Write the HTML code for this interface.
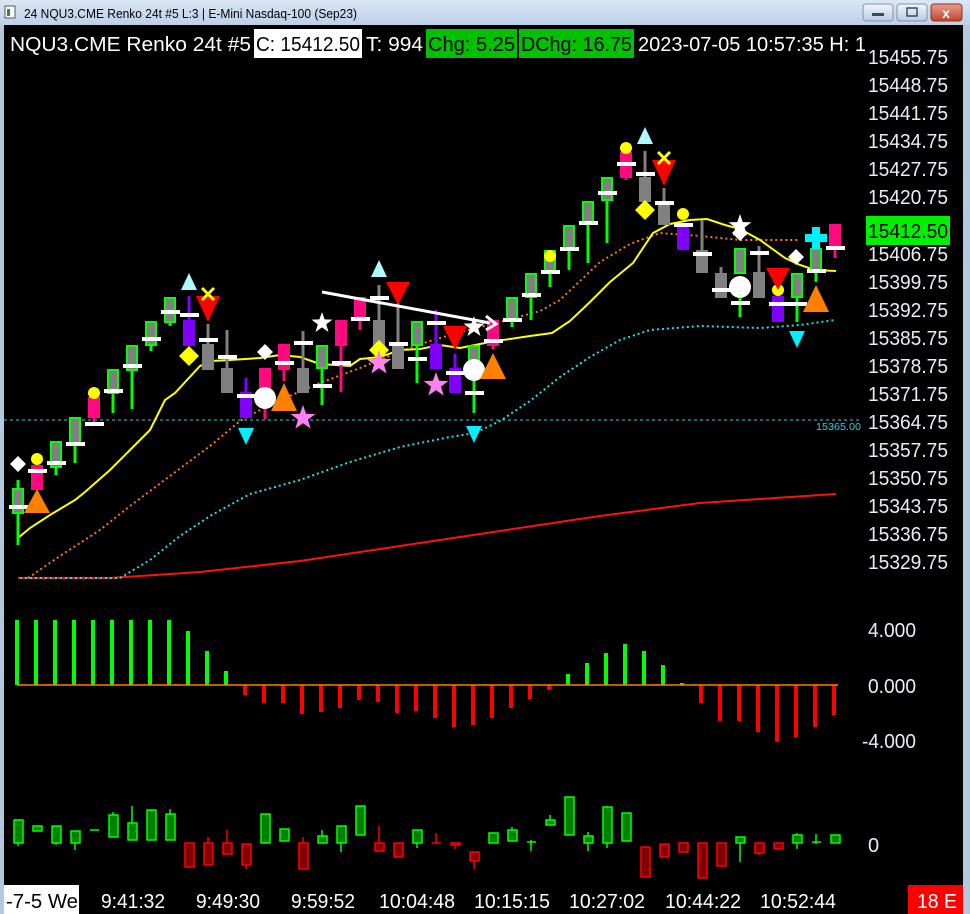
<!DOCTYPE html>
<html><head><meta charset="utf-8"><style>
html,body{margin:0;padding:0;background:#000;width:970px;height:914px;overflow:hidden}
svg{display:block}
text{font-family:"Liberation Sans",sans-serif}
</style></head><body>
<svg width="970" height="914" viewBox="0 0 970 914" xmlns="http://www.w3.org/2000/svg">
<defs>
<linearGradient id="tb" x1="0" y1="0" x2="0" y2="1"><stop offset="0" stop-color="#dbe7f5"/><stop offset="1" stop-color="#bcd0e8"/></linearGradient>
<linearGradient id="bt" x1="0" y1="0" x2="0" y2="1"><stop offset="0" stop-color="#f2f6fb"/><stop offset="1" stop-color="#b9cbe2"/></linearGradient>
<linearGradient id="cl" x1="0" y1="0" x2="0" y2="1"><stop offset="0" stop-color="#e8a08e"/><stop offset="1" stop-color="#c0442c"/></linearGradient>
<g id="tick"><rect x="-9" y="-2" width="19" height="4" fill="#fff"/></g>
</defs>
<rect width="970" height="914" fill="#000"/>
<!-- title bar -->
<rect x="0" y="0" width="970" height="25" fill="url(#tb)"/>
<rect x="0" y="25" width="4" height="889" fill="#b4c8df"/>
<rect x="963" y="25" width="7" height="889" fill="#b4c8df"/>
<rect x="5" y="6" width="10" height="12" fill="#fff" stroke="#555" stroke-width="1"/><rect x="7" y="9" width="3" height="7" fill="#2a8a3a"/>
<text x="24" y="18" font-size="13" fill="#000" textLength="333" lengthAdjust="spacingAndGlyphs">24 NQU3.CME  Renko 24t #5 L:3 | E-Mini Nasdaq-100 (Sep23)</text>
<rect x="863" y="4" width="30" height="17" rx="3" fill="url(#bt)" stroke="#7d93b0"/>
<rect x="872" y="13" width="12" height="3" fill="#3a4a60"/>
<rect x="897" y="4" width="30" height="17" rx="3" fill="url(#bt)" stroke="#7d93b0"/>
<rect x="907" y="8" width="10" height="8" fill="none" stroke="#3a4a60" stroke-width="1.5"/>
<rect x="931" y="4" width="31" height="17" rx="3" fill="url(#cl)" stroke="#8a3020"/>
<text x="946" y="18" font-size="14" font-weight="bold" fill="#fff" text-anchor="middle">x</text>

<!-- header -->
<text x="10" y="51" font-size="20" fill="#fff" textLength="241" lengthAdjust="spacingAndGlyphs">NQU3.CME  Renko 24t #5</text>
<rect x="254" y="29" width="108" height="29" fill="#fff"/>
<text x="256" y="51" font-size="20" fill="#000" textLength="104" lengthAdjust="spacingAndGlyphs">C: 15412.50</text>
<text x="366" y="51" font-size="20" fill="#fff" textLength="57" lengthAdjust="spacingAndGlyphs">T: 994</text>
<rect x="426" y="29" width="91" height="29" fill="#00c000"/>
<text x="428" y="51" font-size="20" fill="#000" textLength="87" lengthAdjust="spacingAndGlyphs">Chg: 5.25</text>
<rect x="519" y="29" width="115" height="29" fill="#00c000"/>
<text x="521" y="51" font-size="20" fill="#000" textLength="111" lengthAdjust="spacingAndGlyphs">DChg: 16.75</text>
<text x="638" y="51" font-size="20" fill="#fff" textLength="228" lengthAdjust="spacingAndGlyphs">2023-07-05 10:57:35 H: 1</text>

<!-- price axis -->
<g font-size="20" fill="#e8eef5">
<text x="868" y="64" textLength="80" lengthAdjust="spacingAndGlyphs">15455.75</text>
<text x="868" y="92" textLength="80" lengthAdjust="spacingAndGlyphs">15448.75</text>
<text x="868" y="120" textLength="80" lengthAdjust="spacingAndGlyphs">15441.75</text>
<text x="868" y="148" textLength="80" lengthAdjust="spacingAndGlyphs">15434.75</text>
<text x="868" y="176" textLength="80" lengthAdjust="spacingAndGlyphs">15427.75</text>
<text x="868" y="204" textLength="80" lengthAdjust="spacingAndGlyphs">15420.75</text>
<text x="868" y="261" textLength="80" lengthAdjust="spacingAndGlyphs">15406.75</text>
<text x="868" y="289" textLength="80" lengthAdjust="spacingAndGlyphs">15399.75</text>
<text x="868" y="317" textLength="80" lengthAdjust="spacingAndGlyphs">15392.75</text>
<text x="868" y="345" textLength="80" lengthAdjust="spacingAndGlyphs">15385.75</text>
<text x="868" y="373" textLength="80" lengthAdjust="spacingAndGlyphs">15378.75</text>
<text x="868" y="401" textLength="80" lengthAdjust="spacingAndGlyphs">15371.75</text>
<text x="868" y="429" textLength="80" lengthAdjust="spacingAndGlyphs">15364.75</text>
<text x="868" y="457" textLength="80" lengthAdjust="spacingAndGlyphs">15357.75</text>
<text x="868" y="485" textLength="80" lengthAdjust="spacingAndGlyphs">15350.75</text>
<text x="868" y="513" textLength="80" lengthAdjust="spacingAndGlyphs">15343.75</text>
<text x="868" y="541" textLength="80" lengthAdjust="spacingAndGlyphs">15336.75</text>
<text x="868" y="569" textLength="80" lengthAdjust="spacingAndGlyphs">15329.75</text>
<text x="868" y="637" textLength="48" lengthAdjust="spacingAndGlyphs">4.000</text>
<text x="868" y="693" textLength="48" lengthAdjust="spacingAndGlyphs">0.000</text>
<text x="862" y="748" textLength="54" lengthAdjust="spacingAndGlyphs">-4.000</text>
<text x="868" y="852">0</text>
</g>
<rect x="866" y="216" width="84" height="29" fill="#00f000"/>
<text x="868" y="238" font-size="20" fill="#000" textLength="80" lengthAdjust="spacingAndGlyphs">15412.50</text>

<!-- dashed level -->
<line x1="4" y1="420" x2="862" y2="420" stroke="#2fd0e0" stroke-width="1" stroke-dasharray="3,3"/>
<text x="816" y="430" font-size="10" fill="#2fd0e0" textLength="45" lengthAdjust="spacingAndGlyphs">15365.00</text>

<!-- lines -->
<polyline fill="none" stroke="#ff1010" stroke-width="2" points="18,578 110,578 200,572 300,561 400,546 500,531 600,516 700,503 760,499 836,494"/>
<polyline fill="none" stroke="#20e0f0" stroke-width="2" stroke-dasharray="2,3" points="20,578 120,578 150,560 180,536 210,516 250,494 300,480 350,462 400,447 450,437 475,433 500,421 530,401 560,377 590,357 620,340 650,330 700,326 760,328 800,325 835,320"/>
<polyline fill="none" stroke="#ff7a10" stroke-width="2" stroke-dasharray="2,3" points="28,578 60,556 100,530 130,506 170,476 210,446 240,421 260,410 280,400 320,383 360,368 420,344 460,332 500,322 540,311 560,300 600,262 630,244 660,233 700,236 740,240 800,240"/>
<polyline fill="none" stroke="#ffff00" stroke-width="2" points="18,538 30,528 50,515 75,500 85,492 110,470 130,450 150,430 165,400 175,393 200,366 212,361 230,360 260,358 280,355 300,357 320,364 350,366 360,359 380,357 400,350 420,349 440,345 460,348 490,342 510,339 530,336 552,333 570,321 590,302 610,282 633,263 653,233 670,224 690,220 707,219 725,225 740,229 760,240 785,258 800,265 815,270 836,271"/>

<!-- candles -->
<g stroke-width="0">
<!-- wicks -->
<g stroke-width="3">
<line x1="18" y1="480" x2="18" y2="545" stroke="#00ff00"/>
<line x1="56" y1="460" x2="56" y2="475" stroke="#00ff00"/>
<line x1="75" y1="440" x2="75" y2="463" stroke="#00ff00"/>
<line x1="94" y1="410" x2="94" y2="422" stroke="#ff0880"/>
<line x1="113" y1="385" x2="113" y2="413" stroke="#00ff00"/>
<line x1="132" y1="360" x2="132" y2="409" stroke="#00ff00"/>
<line x1="151" y1="335" x2="151" y2="351" stroke="#00ff00"/>
<line x1="170" y1="310" x2="170" y2="326" stroke="#00ff00"/>
<line x1="189" y1="296" x2="189" y2="322" stroke="#8000ff"/>
<line x1="208" y1="324" x2="208" y2="346" stroke="#808080"/>
<line x1="227" y1="330" x2="227" y2="370" stroke="#808080"/>
<line x1="246" y1="378" x2="246" y2="394" stroke="#8000ff"/>
<line x1="265" y1="380" x2="265" y2="419" stroke="#ff0880"/>
<line x1="284" y1="360" x2="284" y2="381" stroke="#ff0880"/>
<line x1="303" y1="331" x2="303" y2="370" stroke="#808080"/>
<line x1="322" y1="360" x2="322" y2="405" stroke="#00ff00"/>
<line x1="341" y1="340" x2="341" y2="392" stroke="#ff0880"/>
<line x1="360" y1="310" x2="360" y2="330" stroke="#ff0880"/>
<line x1="379" y1="285" x2="379" y2="322" stroke="#808080"/>
<line x1="398" y1="303" x2="398" y2="346" stroke="#808080"/>
<line x1="417" y1="340" x2="417" y2="383" stroke="#00ff00"/>
<line x1="436" y1="310" x2="436" y2="346" stroke="#8000ff"/>
<line x1="455" y1="354" x2="455" y2="370" stroke="#8000ff"/>
<line x1="474" y1="365" x2="474" y2="413" stroke="#00ff00"/>
<line x1="493" y1="340" x2="493" y2="349" stroke="#ff0880"/>
<line x1="512" y1="315" x2="512" y2="327" stroke="#00ff00"/>
<line x1="531" y1="290" x2="531" y2="320" stroke="#00ff00"/>
<line x1="550" y1="265" x2="550" y2="287" stroke="#00ff00"/>
<line x1="569" y1="245" x2="569" y2="270" stroke="#00ff00"/>
<line x1="588" y1="220" x2="588" y2="263" stroke="#00ff00"/>
<line x1="607" y1="195" x2="607" y2="243" stroke="#00ff00"/>
<line x1="626" y1="170" x2="626" y2="180" stroke="#ff0880"/>
<line x1="645" y1="151" x2="645" y2="179" stroke="#808080"/>
<line x1="664" y1="188" x2="664" y2="203" stroke="#808080"/>
<line x1="702" y1="220" x2="702" y2="252" stroke="#808080"/>
<line x1="721" y1="267" x2="721" y2="275" stroke="#808080"/>
<line x1="740" y1="290" x2="740" y2="317" stroke="#00ff00"/>
<line x1="759" y1="246" x2="759" y2="274" stroke="#808080"/>
<line x1="797" y1="295" x2="797" y2="322" stroke="#00ff00"/>
<line x1="816" y1="268" x2="816" y2="282" stroke="#00ff00"/>
<line x1="835" y1="245" x2="835" y2="258" stroke="#ff0880"/>
</g>
<!-- bodies: g = gray w/ green border -->
<g fill="#808080" stroke="#00ff00" stroke-width="2">
<rect x="13" y="489" width="10" height="24"/>
<rect x="51" y="442" width="10" height="25"/>
<rect x="70" y="418" width="10" height="25"/>
<rect x="108" y="370" width="10" height="23"/>
<rect x="127" y="346" width="10" height="24"/>
<rect x="146" y="322" width="10" height="23"/>
<rect x="165" y="298" width="10" height="24"/>
<rect x="317" y="346" width="10" height="22"/>
<rect x="412" y="322" width="10" height="23"/>
<rect x="469" y="346" width="10" height="24"/>
<rect x="507" y="298" width="10" height="23"/>
<rect x="526" y="274" width="10" height="23"/>
<rect x="545" y="251" width="10" height="20"/>
<rect x="564" y="226" width="10" height="23"/>
<rect x="583" y="202" width="10" height="21"/>
<rect x="602" y="178" width="10" height="22"/>
<rect x="735" y="249" width="10" height="24"/>
<rect x="792" y="274" width="10" height="23"/>
<rect x="811" y="249" width="10" height="23"/>
</g>
<g fill="#808080">
<rect x="202" y="344" width="12" height="26"/>
<rect x="221" y="368" width="12" height="25"/>
<rect x="297" y="368" width="12" height="25"/>
<rect x="373" y="320" width="12" height="26"/>
<rect x="392" y="344" width="12" height="25"/>
<rect x="639" y="177" width="12" height="25"/>
<rect x="658" y="201" width="12" height="24"/>
<rect x="696" y="250" width="12" height="23"/>
<rect x="715" y="273" width="12" height="25"/>
<rect x="753" y="272" width="12" height="26"/>
</g>
<g fill="#ff0880">
<rect x="31" y="465" width="12" height="25"/>
<rect x="88" y="397" width="12" height="21"/>
<rect x="259" y="368" width="12" height="25"/>
<rect x="278" y="344" width="12" height="26"/>
<rect x="335" y="320" width="12" height="26"/>
<rect x="354" y="297" width="12" height="23"/>
<rect x="487" y="320" width="12" height="26"/>
<rect x="620" y="152" width="12" height="26"/>
<rect x="829" y="224" width="12" height="24"/>
</g>
<g fill="#8000ff">
<rect x="183" y="320" width="12" height="26"/>
<rect x="240" y="392" width="12" height="26"/>
<rect x="430" y="344" width="12" height="25"/>
<rect x="449" y="368" width="12" height="25"/>
<rect x="677" y="225" width="12" height="25"/>
<rect x="772" y="296" width="12" height="26"/>
</g>
<!-- ticks -->
<g fill="#fff">
<rect x="9" y="505" width="19" height="4"/><rect x="28" y="469" width="19" height="4"/><rect x="47" y="461" width="19" height="4"/><rect x="66" y="442" width="19" height="4"/><rect x="85" y="422" width="19" height="4"/><rect x="104" y="389" width="19" height="4"/><rect x="123" y="364" width="19" height="4"/><rect x="142" y="337" width="19" height="4"/><rect x="161" y="310" width="19" height="4"/><rect x="180" y="313" width="19" height="4"/><rect x="199" y="338" width="19" height="4"/><rect x="218" y="355" width="19" height="4"/><rect x="237" y="394" width="19" height="4"/><rect x="275" y="361" width="19" height="4"/><rect x="294" y="341" width="19" height="4"/><rect x="313" y="384" width="19" height="4"/><rect x="332" y="361" width="19" height="4"/><rect x="351" y="317" width="19" height="4"/><rect x="370" y="296" width="19" height="4"/><rect x="389" y="342" width="19" height="4"/><rect x="408" y="357" width="19" height="4"/><rect x="427" y="321" width="19" height="4"/><rect x="446" y="371" width="19" height="4"/><rect x="465" y="391" width="19" height="4"/><rect x="484" y="339" width="19" height="4"/><rect x="503" y="318" width="19" height="4"/><rect x="522" y="293" width="19" height="4"/><rect x="541" y="270" width="19" height="4"/><rect x="560" y="247" width="19" height="4"/><rect x="579" y="221" width="19" height="4"/><rect x="598" y="191" width="19" height="4"/><rect x="617" y="162" width="19" height="4"/><rect x="636" y="172" width="19" height="4"/><rect x="655" y="201" width="19" height="4"/><rect x="674" y="223" width="19" height="4"/><rect x="693" y="252" width="19" height="4"/><rect x="712" y="288" width="19" height="4"/><rect x="731" y="301" width="19" height="4"/><rect x="750" y="251" width="19" height="4"/><rect x="769" y="302" width="19" height="4"/><rect x="788" y="302" width="19" height="4"/><rect x="807" y="269" width="19" height="4"/><rect x="826" y="246" width="19" height="4"/>
</g>
</g>

<!-- markers -->
<!-- white circles -->
<g fill="#fff"><circle cx="265" cy="398" r="11"/><circle cx="474" cy="370" r="11"/><circle cx="740" cy="287" r="11"/></g>
<!-- yellow circles -->
<g fill="#ffff00"><circle cx="37" cy="459" r="6"/><circle cx="94" cy="393" r="6"/><circle cx="550" cy="256" r="6"/><circle cx="626" cy="148" r="6"/><circle cx="683" cy="214" r="6"/><circle cx="778" cy="290" r="6"/></g>
<!-- orange triangles up -->
<g fill="#ff8000"><polygon points="37,489 24,513 50,513"/><polygon points="284,383 271,411 297,411"/><polygon points="493,353 480,379 506,379"/><polygon points="816,285 803,312 829,312"/></g>
<!-- red triangles down -->
<g fill="#ff0000"><polygon points="196,296 220,296 208,322"/><polygon points="386,282 410,282 398,305"/><polygon points="443,326 467,326 455,350"/><polygon points="652,160 676,160 664,186"/><polygon points="766,268 790,268 778,290"/></g>
<!-- light cyan triangles up -->
<g fill="#b0f8ff"><polygon points="189,273 181,290 197,290"/><polygon points="379,260 371,277 387,277"/><polygon points="645,127 637,144 653,144"/></g>
<!-- cyan triangles down -->
<g fill="#00f0ff"><polygon points="238,428 254,428 246,445"/><polygon points="466,426 482,426 474,443"/><polygon points="789,331 805,331 797,348"/></g>
<!-- yellow diamonds -->
<g fill="#ffff00"><polygon points="189,346 199,356 189,366 179,356"/><polygon points="379,340 389,350 379,360 369,350"/><polygon points="645,200 655,210 645,220 635,210"/></g>
<!-- white diamonds -->
<g fill="#fff"><polygon points="18,456 26,464 18,472 10,464"/><polygon points="265,344 273,352 265,360 257,352"/><polygon points="740,225 748,233 740,241 732,233"/><polygon points="796,249 804,257 796,265 788,257"/></g>
<!-- yellow X -->
<g stroke="#ffff00" stroke-width="3"><line x1="202" y1="288" x2="214" y2="300"/><line x1="214" y1="288" x2="202" y2="300"/><line x1="658" y1="152" x2="670" y2="164"/><line x1="670" y1="152" x2="658" y2="164"/></g>
<!-- stars -->
<g fill="#ff80f0">
<polygon transform="translate(303,418)" points="0,-13 3.1,-4.2 12.4,-4 5,1.6 7.6,10.5 0,5.2 -7.6,10.5 -5,1.6 -12.4,-4 -3.1,-4.2"/>
<polygon transform="translate(379,363)" points="0,-13 3.1,-4.2 12.4,-4 5,1.6 7.6,10.5 0,5.2 -7.6,10.5 -5,1.6 -12.4,-4 -3.1,-4.2"/>
<polygon transform="translate(436,385)" points="0,-13 3.1,-4.2 12.4,-4 5,1.6 7.6,10.5 0,5.2 -7.6,10.5 -5,1.6 -12.4,-4 -3.1,-4.2"/>
</g>
<g fill="#fff">
<polygon transform="translate(322,323)" points="0,-11 2.6,-3.6 10.5,-3.4 4.2,1.4 6.5,9 0,4.4 -6.5,9 -4.2,1.4 -10.5,-3.4 -2.6,-3.6"/>
<polygon transform="translate(474,327)" points="0,-11 2.6,-3.6 10.5,-3.4 4.2,1.4 6.5,9 0,4.4 -6.5,9 -4.2,1.4 -10.5,-3.4 -2.6,-3.6"/>
<polygon transform="translate(740,226)" points="0,-12 2.8,-3.9 11.4,-3.7 4.6,1.5 7,9.8 0,4.8 -7,9.8 -4.6,1.5 -11.4,-3.7 -2.8,-3.9"/>
</g>
<!-- cyan cross -->
<g fill="#00f0ff"><rect x="812" y="227" width="8" height="22"/><rect x="805" y="234" width="22" height="8"/></g>
<!-- white arrow -->
<line x1="322" y1="292" x2="490" y2="323" stroke="#fff" stroke-width="3"/>
<polyline points="486,316 496,324 486,330" fill="none" stroke="#fff" stroke-width="3"/>

<!-- histogram -->
<g fill="#00ff00">
<rect x="15" y="620" width="4" height="65"/><rect x="34" y="620" width="4" height="65"/><rect x="53" y="620" width="4" height="65"/><rect x="72" y="620" width="4" height="65"/><rect x="91" y="620" width="4" height="65"/><rect x="110" y="620" width="4" height="65"/><rect x="129" y="620" width="4" height="65"/><rect x="148" y="620" width="4" height="65"/><rect x="167" y="620" width="4" height="65"/><rect x="186" y="631" width="4" height="54"/><rect x="205" y="651" width="4" height="34"/><rect x="224" y="671" width="4" height="14"/>
<rect x="566" y="674" width="4" height="11"/><rect x="585" y="663" width="4" height="22"/><rect x="604" y="653" width="4" height="32"/><rect x="623" y="644" width="4" height="41"/><rect x="642" y="651" width="4" height="34"/><rect x="661" y="665" width="4" height="20"/><rect x="680" y="683" width="4" height="2"/>
</g>
<g fill="#ff0000">
<rect x="243" y="685" width="4" height="10"/><rect x="262" y="685" width="4" height="18"/><rect x="281" y="685" width="4" height="18"/><rect x="300" y="685" width="4" height="29"/><rect x="319" y="685" width="4" height="27"/><rect x="338" y="685" width="4" height="23"/><rect x="357" y="685" width="4" height="15"/><rect x="376" y="685" width="4" height="17"/><rect x="395" y="685" width="4" height="28"/><rect x="414" y="685" width="4" height="26"/><rect x="433" y="685" width="4" height="33"/><rect x="452" y="685" width="4" height="42"/><rect x="471" y="685" width="4" height="40"/><rect x="490" y="685" width="4" height="33"/><rect x="509" y="685" width="4" height="23"/><rect x="528" y="685" width="4" height="14"/><rect x="547" y="685" width="4" height="5"/>
<rect x="699" y="685" width="4" height="18"/><rect x="718" y="685" width="4" height="36"/><rect x="737" y="685" width="4" height="36"/><rect x="756" y="685" width="4" height="47"/><rect x="775" y="685" width="4" height="57"/><rect x="794" y="685" width="4" height="52"/><rect x="813" y="685" width="4" height="42"/><rect x="832" y="685" width="4" height="30"/>
</g>
<line x1="17" y1="685" x2="838" y2="685" stroke="#ff8000" stroke-width="1.5"/>

<!-- volume candles -->
<g stroke-width="1.5">
<g stroke="#00ff00" fill="#008000">
<line x1="18" y1="843" x2="18" y2="846"/><rect x="14" y="820" width="9" height="23"/>
<rect x="33" y="826" width="9" height="5"/>
<line x1="56" y1="843" x2="56" y2="845"/><rect x="52" y="826" width="9" height="17"/>
<line x1="75" y1="843" x2="75" y2="850"/><rect x="71" y="831" width="9" height="12"/>
<line x1="90" y1="830" x2="99" y2="830"/>
<line x1="113" y1="812" x2="113" y2="815"/><rect x="109" y="815" width="9" height="22"/>
<line x1="132" y1="806" x2="132" y2="823"/><rect x="128" y="823" width="9" height="17"/>
<rect x="147" y="810" width="9" height="30"/>
<line x1="170" y1="809" x2="170" y2="814"/><rect x="166" y="814" width="9" height="26"/>
<rect x="261" y="814" width="9" height="29"/>
<rect x="280" y="829" width="9" height="12"/>
<line x1="322" y1="830" x2="322" y2="836"/><rect x="318" y="836" width="9" height="7"/>
<line x1="341" y1="843" x2="341" y2="852"/><rect x="337" y="826" width="9" height="17"/>
<rect x="356" y="806" width="9" height="29"/>
<line x1="417" y1="843" x2="417" y2="848"/><rect x="413" y="830" width="9" height="13"/>
<rect x="489" y="833" width="9" height="10"/>
<line x1="512" y1="827" x2="512" y2="830"/><rect x="508" y="830" width="9" height="11"/>
<line x1="531" y1="840" x2="531" y2="851"/><line x1="527" y1="842" x2="536" y2="842"/>
<line x1="550" y1="815" x2="550" y2="820"/><rect x="546" y="820" width="9" height="5"/>
<rect x="565" y="797" width="9" height="38"/>
<line x1="588" y1="832" x2="588" y2="851"/><rect x="584" y="836" width="9" height="7"/>
<line x1="607" y1="806" x2="607" y2="848"/><rect x="603" y="807" width="9" height="36"/>
<rect x="622" y="813" width="9" height="28"/>
<line x1="740" y1="843" x2="740" y2="862"/><rect x="736" y="837" width="9" height="6"/>
<line x1="797" y1="833" x2="797" y2="849"/><rect x="793" y="835" width="9" height="8"/>
<line x1="816" y1="834" x2="816" y2="844"/><line x1="812" y1="842" x2="821" y2="842"/>
<rect x="831" y="835" width="9" height="8"/>
</g>
<g stroke="#ff0000" fill="#800000">
<rect x="185" y="843" width="9" height="24"/>
<line x1="208" y1="837" x2="208" y2="843"/><rect x="204" y="843" width="9" height="22"/>
<line x1="227" y1="830" x2="227" y2="843"/><rect x="223" y="843" width="9" height="11"/>
<line x1="246" y1="865" x2="246" y2="869"/><rect x="242" y="844" width="9" height="21"/>
<line x1="303" y1="837" x2="303" y2="843"/><rect x="299" y="843" width="9" height="26"/>
<line x1="379" y1="826" x2="379" y2="843"/><rect x="375" y="843" width="9" height="8"/>
<rect x="394" y="843" width="9" height="14"/>
<line x1="436" y1="833" x2="436" y2="843"/><line x1="432" y1="843" x2="441" y2="843"/>
<line x1="455" y1="843" x2="455" y2="849"/><rect x="451" y="843" width="9" height="2"/>
<line x1="474" y1="861" x2="474" y2="869"/><rect x="470" y="852" width="9" height="9"/>
<rect x="641" y="847" width="9" height="30"/>
<rect x="660" y="844" width="9" height="13"/>
<rect x="679" y="843" width="9" height="9"/>
<rect x="698" y="843" width="9" height="35"/>
<rect x="717" y="843" width="9" height="23"/>
<line x1="759" y1="853" x2="759" y2="855"/><rect x="755" y="843" width="9" height="10"/>
<rect x="774" y="843" width="9" height="6"/>
</g>
</g>

<!-- time axis -->
<rect x="4" y="885" width="75" height="29" fill="#fff"/>
<text x="6" y="908" font-size="20" fill="#000" textLength="72" lengthAdjust="spacingAndGlyphs">-7-5 We</text>
<g font-size="20" fill="#fff">
<text x="101" y="908" textLength="64" lengthAdjust="spacingAndGlyphs">9:41:32</text>
<text x="196" y="908" textLength="64" lengthAdjust="spacingAndGlyphs">9:49:30</text>
<text x="291" y="908" textLength="64" lengthAdjust="spacingAndGlyphs">9:59:52</text>
<text x="379" y="908" textLength="76" lengthAdjust="spacingAndGlyphs">10:04:48</text>
<text x="474" y="908" textLength="76" lengthAdjust="spacingAndGlyphs">10:15:15</text>
<text x="569" y="908" textLength="76" lengthAdjust="spacingAndGlyphs">10:27:02</text>
<text x="665" y="908" textLength="76" lengthAdjust="spacingAndGlyphs">10:44:22</text>
<text x="760" y="908" textLength="76" lengthAdjust="spacingAndGlyphs">10:52:44</text>
</g>
<rect x="908" y="885" width="55" height="29" fill="#ff0000"/>
<text x="917" y="908" font-size="20" fill="#fff" textLength="40" lengthAdjust="spacingAndGlyphs">18 E</text>
</svg>
</body></html>
